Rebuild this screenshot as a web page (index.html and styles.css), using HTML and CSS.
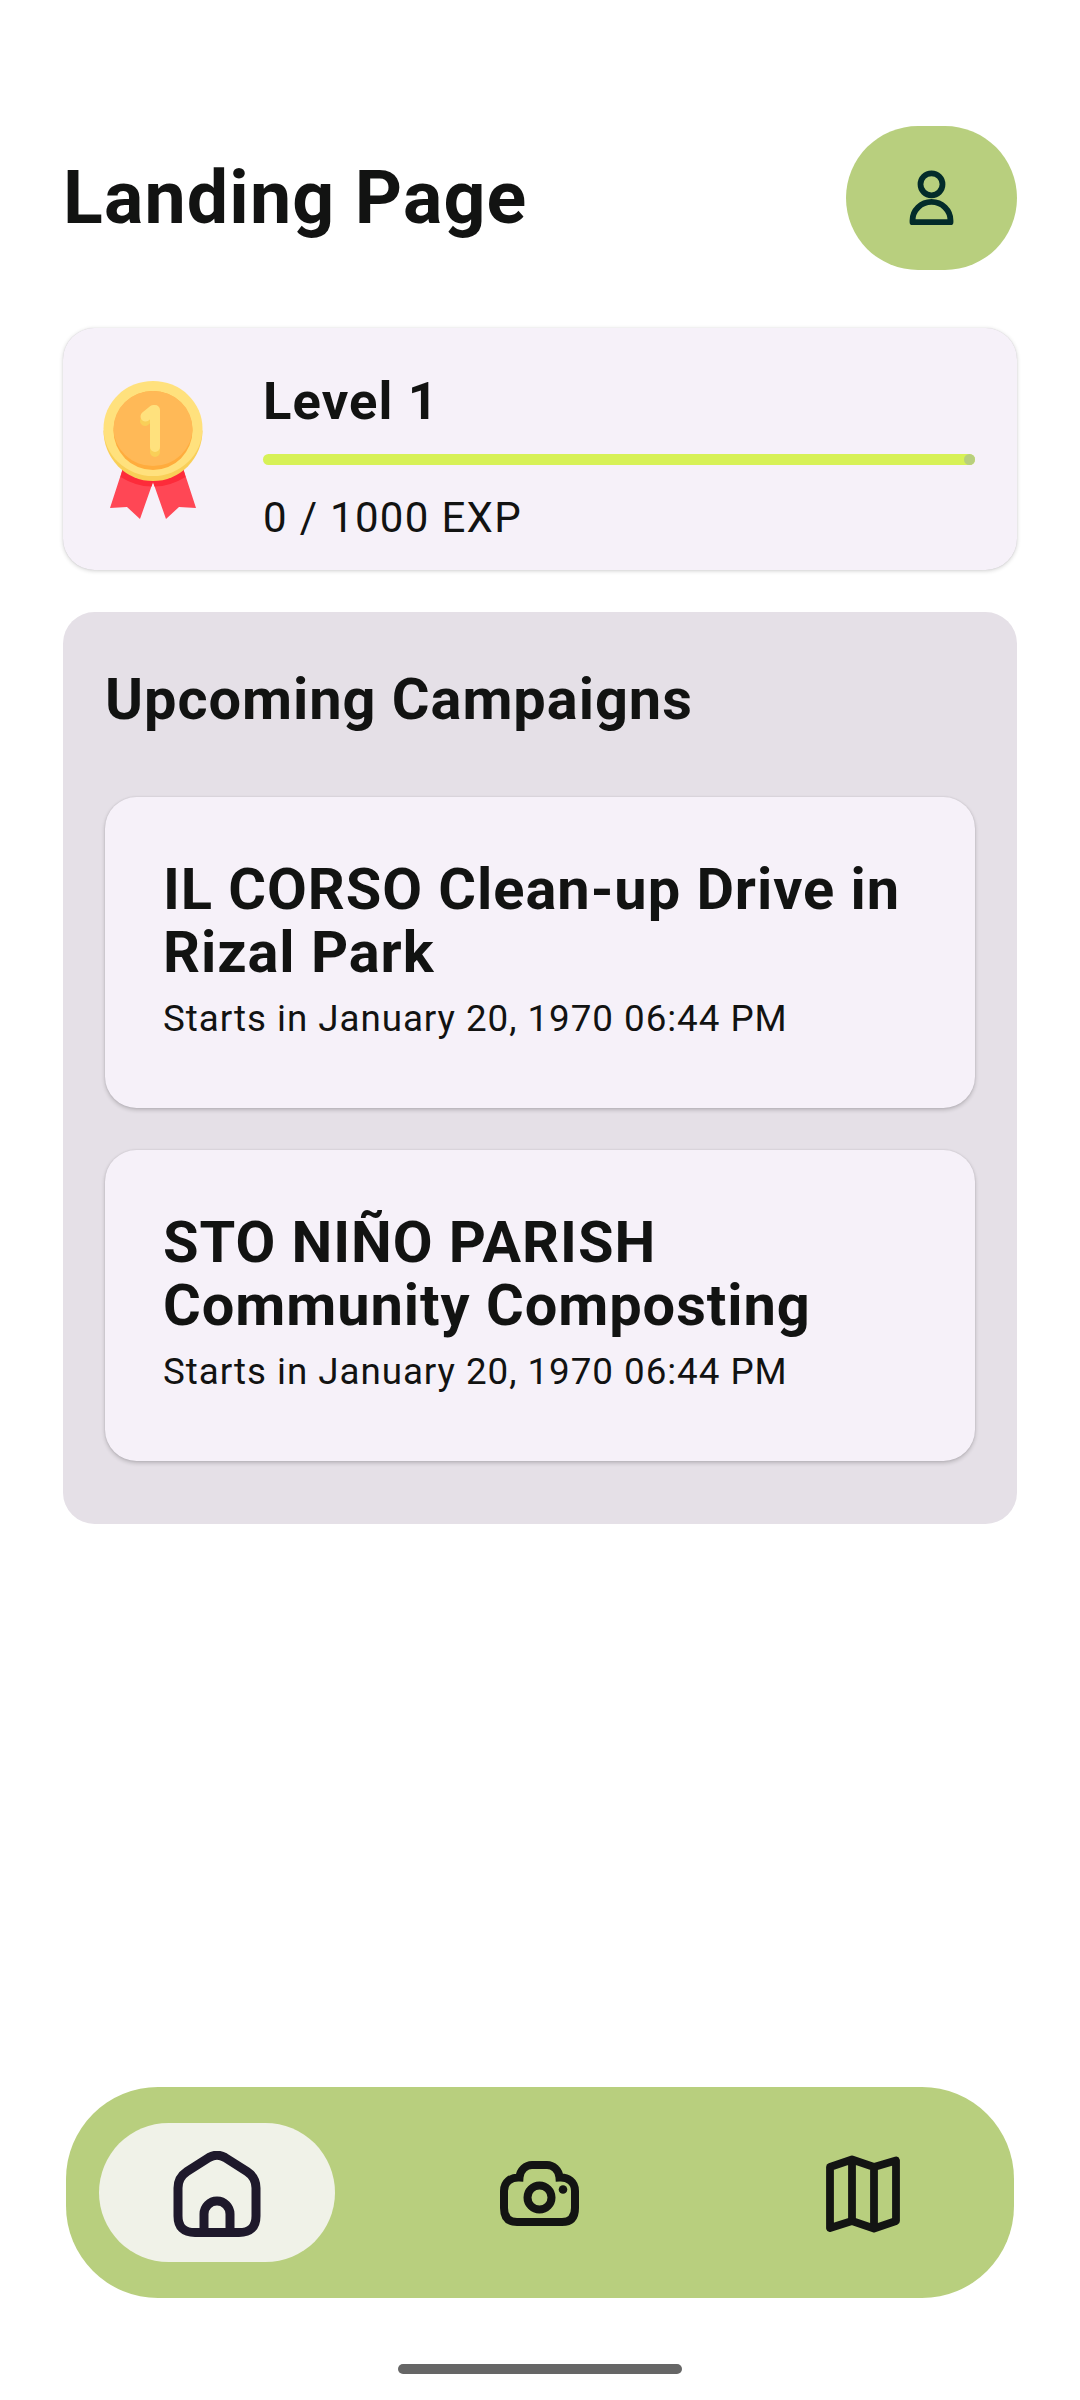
FILE: index.html
```html
<!DOCTYPE html>
<html lang="en">
<head>
<meta charset="utf-8">
<title>Landing Page</title>
<link rel="stylesheet" href="styles.css">
</head>
<body>
<div class="screen">
  <header class="header">
    <h1 class="title">Landing Page</h1>
    <button class="profile" aria-label="Profile">
      <svg width="46" height="58" viewBox="0 0 46 58" fill="none" stroke="#032b2a" stroke-width="5.8" stroke-linejoin="round">
        <circle cx="22.500" cy="15.300" r="11"/>
        <path d="M3.500 53.200V51.500a19 18.600 0 0 1 38 0V53.200Z"/>
      </svg>
    </button>
  </header>

  <section class="level">
    <svg class="medal" width="100" height="138" viewBox="0 0 100 138">
      <path d="M20 87 7 127l17-1 13 12L50 101l13 37 13-12 17 1L80 87Z" fill="#ff4755"/>
      <path d="M20 87 17.500 96Q33 105.500 48.500 105.500L50 101l1.500 4.500Q67 105.500 82.500 96L80 87Z" fill="#fd2b3a"/>
      <path d="M.5 49.500h99a49.500 50.500 0 0 1-99 0Z" fill="#f9cf58"/>
      <ellipse cx="50" cy="47.500" rx="49.500" ry="47.500" fill="#ffe17d"/>
      <circle cx="50" cy="49.500" r="39.500" fill="#ffac3d"/>
      <path d="M10.500 47.500a39.500 37.500 0 0 1 79 0 39.500 37.500 0 0 1-79 0Z" fill="#ffb957"/>
      <path d="m42 40 10-9v40" fill="none" stroke="#f9cf58" stroke-width="10" stroke-linecap="round" stroke-linejoin="round"/>
      <path d="m42.500 35.500 8-6.500h1.500v37" fill="none" stroke="#ffe17d" stroke-width="10" stroke-linecap="round" stroke-linejoin="round"/>
    </svg>
    <div class="level-info">
      <h2 class="level-name">Level 1</h2>
      <div class="progress"><span class="progress-stop"></span></div>
      <p class="exp">0 / 1000 EXP</p>
    </div>
  </section>

  <section class="campaigns">
    <h2 class="campaigns-title">Upcoming Campaigns</h2>
    <article class="card">
      <h3 class="card-title">IL CORSO Clean-up Drive in Rizal Park</h3>
      <p class="card-date">Starts in January 20, 1970 06:44 PM</p>
    </article>
    <article class="card">
      <h3 class="card-title">STO NIÑO PARISH Community Composting</h3>
      <p class="card-date">Starts in January 20, 1970 06:44 PM</p>
    </article>
  </section>

  <nav class="nav">
    <a class="nav-item nav-active">
      <svg width="88" height="86" viewBox="0 0 88 86" fill="none" stroke="#1e192b" stroke-width="9">
        <path d="M36 6.500 14 20.500Q5 26.500 5 37V65Q5 81.500 22 81.500H66Q83 81.500 83 65V37Q83 26.500 74 20.500L52 6.500Q44 2 36 6.500Z"/>
        <path d="M31 81V63a13 13 0 0 1 26 0V81"/>
      </svg>
    </a>
    <a class="nav-item">
      <svg width="79" height="65" viewBox="0 0 79 65" fill="none" stroke="#131413" stroke-width="8">
        <path d="M19.500 16.500C20 9 26 4 32 4H47C53 4 59 9 59.500 16.500C68 16 75 21 75 30V47Q75 61 62 61H17Q4 61 4 47V30C4 21 11 16 19.500 16.500Z"/>
        <circle cx="39.500" cy="36.500" r="12"/>
        <circle cx="63" cy="28.500" r="4.300" fill="#131413" stroke="none"/>
      </svg>
    </a>
    <a class="nav-item">
      <svg width="76" height="78" viewBox="0 0 76 78" fill="none" stroke="#131413" stroke-width="7.800" stroke-linejoin="round">
        <path d="M5 12 27 4.500 49 12 71 5.500V66L49 73.500 27 66 5 73ZM27 4.500V66M49 12V73.500"/>
      </svg>
    </a>
  </nav>
  <div class="gesture-bar"></div>
</div>
</body>
</html>
```
FILE: styles.css
```css
* {
  box-sizing: border-box;
}

body {
  margin: 0;
  background: #fff;
  color: #121312;
  font-family: Roboto, sans-serif;
}

h1, h2, h3, p {
  margin: 0;
  font-weight: 700;
  letter-spacing: .95px;
}

p {
  font-weight: 400;
}

svg {
  display: block;
}

.screen {
  display: flex;
  flex-direction: column;
  width: 1080px;
  height: 2400px;
  padding: 126px 63px 26px;
}

.header {
  display: flex;
  align-items: center;
  justify-content: space-between;
  height: 144px;
}

.title {
  font-size: 73.5px;
  line-height: 84px;
  letter-spacing: 1.15px;
}

.profile {
  display: flex;
  align-items: center;
  justify-content: center;
  width: 171px;
  height: 144px;
  padding: 0;
  border: 0;
  border-radius: 72px;
  background: #b8cf7e;
}

.level {
  display: flex;
  height: 242px;
  margin-top: 58px;
  padding: 0 42px 0 39.5px;
  border-radius: 31.5px;
  background: #f6f1f9;
  box-shadow: 0 1px 4px rgba(0, 0, 0, .18), 0 0 1px rgba(0, 0, 0, .15);
}

.medal {
  margin-top: 53px;
}

.level-info {
  flex: 1;
  margin-left: 60.5px;
  padding-top: 42px;
}

.level-name {
  font-size: 52.5px;
  line-height: 63px;
  letter-spacing: 1.15px;
}

.progress {
  display: flex;
  justify-content: flex-end;
  height: 11px;
  margin-top: 21px;
  border-radius: 6px;
  background: #d7f157;
}

.progress-stop {
  width: 11px;
  border-radius: 50%;
  background: #b8cf7e;
}

.exp {
  margin-top: 28px;
  font-size: 42px;
  line-height: 50px;
  letter-spacing: 1.31px;
}

.campaigns {
  display: flex;
  flex-direction: column;
  gap: 42px;
  height: 912px;
  margin-top: 42px;
  padding: 56px 42px 0;
  border-radius: 31.5px;
  background: #e5e0e7;
}

.campaigns-title {
  margin-bottom: 24px;
  font-size: 57.75px;
  line-height: 63px;
}

.card {
  height: 311px;
  padding: 61px 58px 0;
  border-radius: 31.5px;
  background: #f6f1f9;
  box-shadow: 0 2px 4px rgba(0, 0, 0, .2), 0 0 2px rgba(0, 0, 0, .1);
}

.card-title {
  font-size: 57.75px;
  line-height: 63px;
}

.card-date {
  margin-top: 8px;
  font-size: 36.75px;
  line-height: 53px;
  letter-spacing: .96px;
}

.nav {
  display: grid;
  grid-template-columns: repeat(3, 236px);
  align-items: center;
  justify-content: space-between;
  height: 211px;
  margin: auto 3px 0;
  padding: 0 33px;
  border-radius: 92px;
  background: #b8cf7e;
}

.nav-item {
  display: flex;
  align-items: center;
  justify-content: center;
  height: 139px;
  padding: 2px 1px 0 0;
  border-radius: 70px;
}

.nav-active {
  background: #f0f2e8;
}

.gesture-bar {
  align-self: center;
  width: 284px;
  height: 10px;
  margin-top: 66px;
  border-radius: 5px;
  background: #666;
}
```
